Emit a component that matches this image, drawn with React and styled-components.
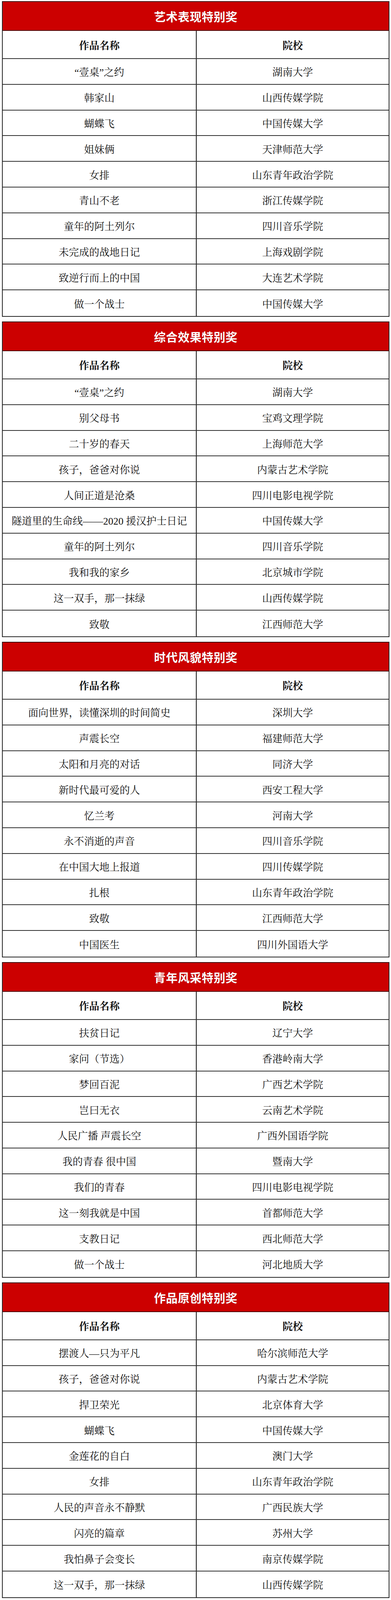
import React from "react";
import styled, { createGlobalStyle } from "styled-components";

const Global = createGlobalStyle`
  html, body { margin: 0; padding: 0; background: #ffffff; }
  body { font-family: "Liberation Serif", "Noto Serif CJK SC", "Noto Sans CJK SC", serif; }
`;

const Page = styled.div`
  display: flex;
  flex-direction: column;
  gap: 12px;
  padding: 3px 4px 4px 5px;
  background: #ffffff;
`;

const Table = styled.section`
  display: flex;
  flex-direction: column;
  border: 2px solid #262626;
  border-top-color: #3a0c0c;
  background: #ffffff;
`;

const Title = styled.h2`
  margin: 0;
  height: 74px;
  box-sizing: border-box;
  display: flex;
  align-items: center;
  justify-content: center;
  background: #cc0000;
  border-bottom: 2px solid #4a0808;
  color: #ffffff;
  font-family: "Noto Sans CJK SC", sans-serif;
  font-size: 30px;
  font-weight: 700;
  letter-spacing: 0.5px;
  text-shadow: 0 0 1px rgba(80, 0, 0, 0.6);
`;

const Row = styled.div`
  display: grid;
  grid-template-columns: 494px 1fr;
  height: ${(p) => (p.$head ? "72px" : "65.8px")};
  box-sizing: border-box;
  border-bottom: 2px solid #303030;
  &:last-child {
    border-bottom: none;
  }
`;

const Cell = styled.div`
  display: flex;
  align-items: center;
  justify-content: center;
  font-size: 26px;
  font-weight: ${(p) => (p.$head ? 700 : 400)};
  color: #111111;
  white-space: nowrap;
  & + & {
    border-left: 2px solid #111111;
  }
`;

const data = [
  {
    title: "艺术表现特别奖",
    rows: [
      ["“壹桌”之约", "湖南大学"],
      ["韩家山", "山西传媒学院"],
      ["蝴蝶飞", "中国传媒大学"],
      ["姐妹俩", "天津师范大学"],
      ["女排", "山东青年政治学院"],
      ["青山不老", "浙江传媒学院"],
      ["童年的阿土列尔", "四川音乐学院"],
      ["未完成的战地日记", "上海戏剧学院"],
      ["致逆行而上的中国", "大连艺术学院"],
      ["做一个战士", "中国传媒大学"],
    ],
  },
  {
    title: "综合效果特别奖",
    rows: [
      ["“壹桌”之约", "湖南大学"],
      ["别父母书", "宝鸡文理学院"],
      ["二十岁的春天", "上海师范大学"],
      ["孩子，爸爸对你说", "内蒙古艺术学院"],
      ["人间正道是沧桑", "四川电影电视学院"],
      ["隧道里的生命线——2020 援汉护士日记", "中国传媒大学"],
      ["童年的阿土列尔", "四川音乐学院"],
      ["我和我的家乡", "北京城市学院"],
      ["这一双手，那一抹绿", "山西传媒学院"],
      ["致敬", "江西师范大学"],
    ],
  },
  {
    title: "时代风貌特别奖",
    rows: [
      ["面向世界，读懂深圳的时间简史", "深圳大学"],
      ["声震长空", "福建师范大学"],
      ["太阳和月亮的对话", "同济大学"],
      ["新时代最可爱的人", "西安工程大学"],
      ["忆兰考", "河南大学"],
      ["永不消逝的声音", "四川音乐学院"],
      ["在中国大地上报道", "四川传媒学院"],
      ["扎根", "山东青年政治学院"],
      ["致敬", "江西师范大学"],
      ["中国医生", "四川外国语大学"],
    ],
  },
  {
    title: "青年风采特别奖",
    rows: [
      ["扶贫日记", "辽宁大学"],
      ["家问（节选）", "香港岭南大学"],
      ["梦回百泥", "广西艺术学院"],
      ["岂曰无衣", "云南艺术学院"],
      ["人民广播 声震长空", "广西外国语学院"],
      ["我的青春 很中国", "暨南大学"],
      ["我们的青春", "四川电影电视学院"],
      ["这一刻我就是中国", "首都师范大学"],
      ["支教日记", "西北师范大学"],
      ["做一个战士", "河北地质大学"],
    ],
  },
  {
    title: "作品原创特别奖",
    rows: [
      ["摆渡人—只为平凡", "哈尔滨师范大学"],
      ["孩子，爸爸对你说", "内蒙古艺术学院"],
      ["捍卫荣光", "北京体育大学"],
      ["蝴蝶飞", "中国传媒大学"],
      ["金莲花的自白", "澳门大学"],
      ["女排", "山东青年政治学院"],
      ["人民的声音永不静默", "广西民族大学"],
      ["闪亮的篇章", "苏州大学"],
      ["我怕鼻子会变长", "南京传媒学院"],
      ["这一双手，那一抹绿", "山西传媒学院"],
    ],
  },
];

export default function App() {
  return (
    <>
      <Global />
      <Page>
        {data.map((t) => (
          <Table key={t.title}>
            <Title>{t.title}</Title>
            <Row $head>
              <Cell $head>作品名称</Cell>
              <Cell $head>院校</Cell>
            </Row>
            {t.rows.map(([work, school], i) => (
              <Row key={i}>
                <Cell>{work}</Cell>
                <Cell>{school}</Cell>
              </Row>
            ))}
          </Table>
        ))}
      </Page>
    </>
  );
}
